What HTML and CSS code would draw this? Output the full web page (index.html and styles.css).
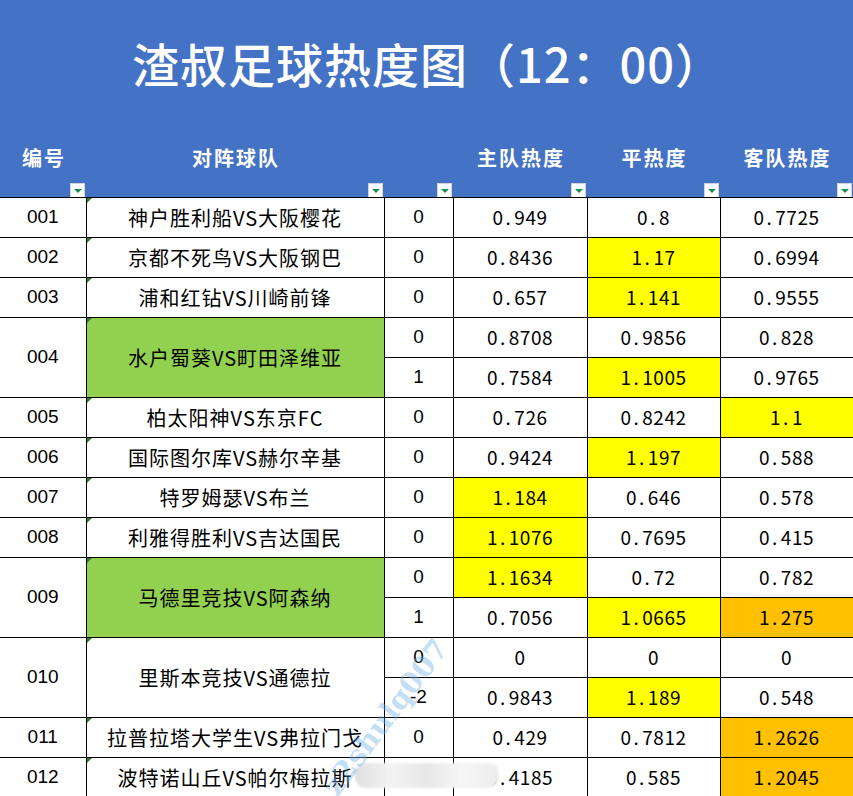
FILE: index.html
```html
<!DOCTYPE html>
<html lang="zh-CN">
<head>
<meta charset="utf-8">
<title>渣叔足球热度图</title>
<link rel="stylesheet" href="styles.css">
</head>
<body>
<div class="sheet">
  <div class="band"><h1 class="title">渣叔足球热度图（12：00）</h1></div>
  <table class="grid">
    <colgroup>
      <col class="c-id"><col class="c-team"><col class="c-hc"><col class="c-num"><col class="c-num2"><col class="c-num2">
    </colgroup>
    <thead>
      <tr>
        <th><div class="hd"><span class="lbl">编号</span><span class="flt"></span></div></th>
        <th><div class="hd"><span class="lbl">对阵球队</span><span class="flt"></span></div></th>
        <th><div class="hd"><span class="lbl"></span><span class="flt"></span></div></th>
        <th><div class="hd"><span class="lbl">主队热度</span><span class="flt"></span></div></th>
        <th><div class="hd"><span class="lbl">平热度</span><span class="flt"></span></div></th>
        <th><div class="hd"><span class="lbl">客队热度</span><span class="flt"></span></div></th>
      </tr>
    </thead>
    <tbody>
      <tr><td class="id">001</td><td class="team">神户胜利船VS大阪樱花</td><td class="hc">0</td><td class="n">0<span class="p">.</span>949</td><td class="n">0<span class="p">.</span>8</td><td class="n">0<span class="p">.</span>7725</td></tr>
      <tr><td class="id">002</td><td class="team">京都不死鸟VS大阪钢巴</td><td class="hc">0</td><td class="n">0<span class="p">.</span>8436</td><td class="n y">1<span class="p">.</span>17</td><td class="n">0<span class="p">.</span>6994</td></tr>
      <tr><td class="id">003</td><td class="team">浦和红钻VS川崎前锋</td><td class="hc">0</td><td class="n">0<span class="p">.</span>657</td><td class="n y">1<span class="p">.</span>141</td><td class="n">0<span class="p">.</span>9555</td></tr>
      <tr><td class="id" rowspan="2">004</td><td class="team g" rowspan="2">水户蜀葵VS町田泽维亚</td><td class="hc">0</td><td class="n">0<span class="p">.</span>8708</td><td class="n">0<span class="p">.</span>9856</td><td class="n">0<span class="p">.</span>828</td></tr>
      <tr><td class="hc">1</td><td class="n">0<span class="p">.</span>7584</td><td class="n y">1<span class="p">.</span>1005</td><td class="n">0<span class="p">.</span>9765</td></tr>
      <tr><td class="id">005</td><td class="team">柏太阳神VS东京FC</td><td class="hc">0</td><td class="n">0<span class="p">.</span>726</td><td class="n">0<span class="p">.</span>8242</td><td class="n y">1<span class="p">.</span>1</td></tr>
      <tr><td class="id">006</td><td class="team">国际图尔库VS赫尔辛基</td><td class="hc">0</td><td class="n">0<span class="p">.</span>9424</td><td class="n y">1<span class="p">.</span>197</td><td class="n">0<span class="p">.</span>588</td></tr>
      <tr><td class="id">007</td><td class="team">特罗姆瑟VS布兰</td><td class="hc">0</td><td class="n y">1<span class="p">.</span>184</td><td class="n">0<span class="p">.</span>646</td><td class="n">0<span class="p">.</span>578</td></tr>
      <tr><td class="id">008</td><td class="team">利雅得胜利VS吉达国民</td><td class="hc">0</td><td class="n y">1<span class="p">.</span>1076</td><td class="n">0<span class="p">.</span>7695</td><td class="n">0<span class="p">.</span>415</td></tr>
      <tr><td class="id" rowspan="2">009</td><td class="team g" rowspan="2">马德里竞技VS阿森纳</td><td class="hc">0</td><td class="n y">1<span class="p">.</span>1634</td><td class="n">0<span class="p">.</span>72</td><td class="n">0<span class="p">.</span>782</td></tr>
      <tr><td class="hc">1</td><td class="n">0<span class="p">.</span>7056</td><td class="n y">1<span class="p">.</span>0665</td><td class="n o">1<span class="p">.</span>275</td></tr>
      <tr><td class="id" rowspan="2">010</td><td class="team" rowspan="2">里斯本竞技VS通德拉</td><td class="hc">0</td><td class="n">0</td><td class="n">0</td><td class="n">0</td></tr>
      <tr><td class="hc">-2</td><td class="n">0<span class="p">.</span>9843</td><td class="n y">1<span class="p">.</span>189</td><td class="n">0<span class="p">.</span>548</td></tr>
      <tr><td class="id">011</td><td class="team">拉普拉塔大学生VS弗拉门戈</td><td class="hc">0</td><td class="n">0<span class="p">.</span>429</td><td class="n">0<span class="p">.</span>7812</td><td class="n o">1<span class="p">.</span>2626</td></tr>
      <tr><td class="id">012</td><td class="team">波特诺山丘VS帕尔梅拉斯</td><td class="hc">0</td><td class="n">0<span class="p">.</span>4185</td><td class="n">0<span class="p">.</span>585</td><td class="n o">1<span class="p">.</span>2045</td></tr>
    </tbody>
  </table>
  <div class="blur" aria-hidden="true"></div>
  <div class="wm" aria-hidden="true">z2shulq007</div>
</div>
</body>
</html>
```

FILE: styles.css
```css
html, body {
  margin: 0;
  padding: 0;
  background: #ffffff;
}

.sheet {
  position: relative;
  width: 853px;
  height: 796px;
  overflow: hidden;
  font-family: "Noto Sans CJK SC", "Noto Sans", sans-serif;
  color: #000;
}

.band {
  background: #4472c4;
  height: 128px;
  display: flex;
  align-items: center;
  justify-content: center;
  padding-left: 2px;
  box-sizing: border-box;
}

.title {
  margin: 0;
  color: #ffffff;
  font-size: 47px;
  font-weight: 500;
  letter-spacing: 1px;
  line-height: 1;
  padding-bottom: 4px;
}

.grid {
  border-collapse: collapse;
  table-layout: fixed;
  width: 853px;
}

.c-id { width: 86px; }
.c-team { width: 298px; }
.c-hc { width: 69px; }
.c-num { width: 134px; }
.c-num2 { width: 133px; }

.grid th {
  background: #4472c4;
  padding: 0;
  border: none;
}

.hd {
  height: 69px;
  display: flex;
  flex-direction: column;
  align-items: center;
}

.lbl {
  margin-top: 17px;
  height: 26px;
  line-height: 26px;
  color: #ffffff;
  font-size: 20px;
  font-weight: 700;
  letter-spacing: 2px;
  padding-left: 2px;
}

.flt {
  margin-top: auto;
  align-self: flex-end;
  margin-right: 1px;
  width: 13px;
  height: 13px;
  background: #ffffff;
  border: 1px solid #d4d4d4;
  border-bottom: none;
  position: relative;
}

.flt::after {
  content: "";
  position: absolute;
  left: 3px;
  top: 5px;
  border-left: 4px solid transparent;
  border-right: 4px solid transparent;
  border-top: 4px solid #1a8c55;
}

.grid td {
  border: 1px solid #000;
  height: 39px;
  padding: 0;
  text-align: center;
  vertical-align: middle;
  line-height: 1.2;
}

.grid tr td.id {
  border-left: none;
}

.id {
  font-family: "Liberation Sans", Arial, sans-serif;
  font-size: 19px;
}

.team {
  position: relative;
  font-size: 20px;
  letter-spacing: 1px;
}

.team::before {
  content: "";
  position: absolute;
  left: 0;
  top: 0;
  border-top: 5px solid #2e7d32;
  border-right: 5px solid transparent;
}

.hc {
  font-family: "Liberation Sans", Arial, sans-serif;
  font-size: 19px;
}

.n {
  font-size: 19px;
  letter-spacing: 0.5px;
}

.p {
  margin: 0 3px 0 2px;
}

.y { background: #ffff00; }
.o { background: #ffc000; }
.g { background: #92d050; }

.blur {
  position: absolute;
  left: 355px;
  top: 763px;
  width: 144px;
  height: 25px;
  border-radius: 11px;
  background: linear-gradient(90deg, #e0e0e0, #f3f3f3 25%, #e8e8e8 50%, #f6f6f6 75%, #ececec);
  filter: blur(1px);
}

.wm {
  position: absolute;
  left: 292px;
  top: 700px;
  transform: rotate(-53deg);
  transform-origin: center;
  font-family: "DejaVu Serif", serif;
  font-weight: 700;
  font-size: 29px;
  color: rgba(110, 175, 230, 0.42);
  letter-spacing: 0;
  white-space: nowrap;
}
```
